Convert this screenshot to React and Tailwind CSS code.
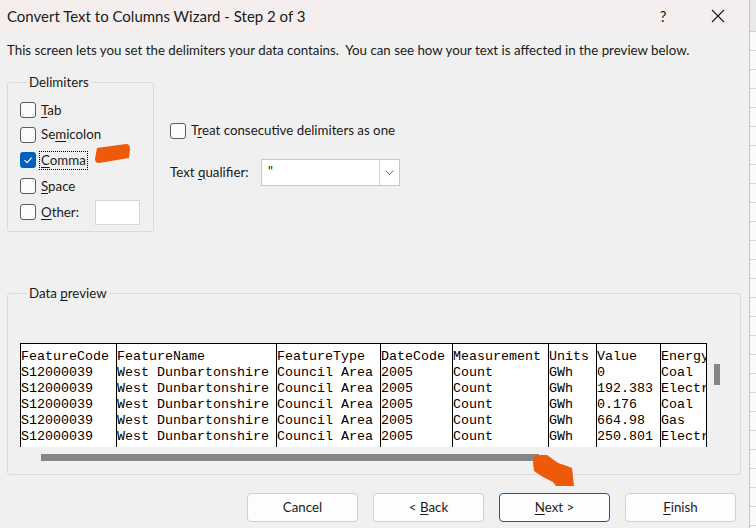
import React from 'react';

const ui = { fontFamily: 'Lato, "Noto Sans", sans-serif' };
const mono = { fontFamily: '"Liberation Mono", "Courier New", monospace' };

const columns = [
  { w: 'w-[96px]', rows: ['FeatureCode', 'S12000039', 'S12000039', 'S12000039', 'S12000039', 'S12000039'] },
  { w: 'w-[160px]', rows: ['FeatureName', 'West Dunbartonshire', 'West Dunbartonshire', 'West Dunbartonshire', 'West Dunbartonshire', 'West Dunbartonshire'] },
  { w: 'w-[104px]', rows: ['FeatureType', 'Council Area', 'Council Area', 'Council Area', 'Council Area', 'Council Area'] },
  { w: 'w-[72px]', rows: ['DateCode', '2005', '2005', '2005', '2005', '2005'] },
  { w: 'w-[96px]', rows: ['Measurement', 'Count', 'Count', 'Count', 'Count', 'Count'] },
  { w: 'w-[48px]', rows: ['Units', 'GWh', 'GWh', 'GWh', 'GWh', 'GWh'] },
  { w: 'w-[64px]', rows: ['Value', '0', '192.383', '0.176', '664.98', '250.801'] },
  { w: 'w-[46px]', rows: ['Energy', 'Coal', 'Electricity', 'Coal', 'Gas', 'Electricity'] },
];

const Key = ({ children }) => <span className="underline underline-offset-[2px] decoration-[1px]">{children}</span>;

const CheckBox = ({ checked }) =>
  checked ? (
    <span className="w-[16px] h-[16px] rounded-[3px] bg-[#005fb8] flex items-center justify-center shrink-0">
      <svg width="12" height="12" viewBox="0 0 12 12">
        <path d="M2.5 6.2 L5 8.6 L9.6 3.6" fill="none" stroke="white" strokeWidth="1.1" />
      </svg>
    </span>
  ) : (
    <span className="w-[16px] h-[16px] rounded-[3px] border border-[#5c5c5c] bg-[#fbfbfb] shrink-0" />
  );

const Option = ({ checked, focus, h, children, extra }) => (
  <div className={`flex items-center ${h}`}>
    <CheckBox checked={checked} />
    <span
      className={`ml-[3px] px-[1px] leading-[17px] border ${focus ? 'border-dotted border-black' : 'border-transparent'}`}
    >
      {children}
    </span>
    {extra}
  </div>
);

const Button = ({ primary, children }) => (
  <button
    className={`w-[111px] h-[29px] rounded-[4px] bg-[#fdfdfd] text-[13.3px] text-[#1b1b1b] border ${
      primary ? 'border-[#005fb8]' : 'border-[#d1d1d1]'
    }`}
  >
    {children}
  </button>
);

export default function App() {
  const sheetRows = Array.from({ length: 28 });

  return (
    <div className="relative w-[756px] h-[528px] flex overflow-hidden bg-white" style={ui}>
      {/* dialog */}
      <div className="w-[750px] h-[528px] flex flex-col bg-[#f0f0f0] border-r border-[#c4c4c4] text-[#1a1a1a]">
        <div className="h-[32px] shrink-0 flex items-center bg-[#f4efee] pl-[7px]">
          <span className="text-[15px]">Convert Text to Columns Wizard - Step 2 of 3</span>
          <span className="ml-auto text-[15px] w-[14px] text-center">?</span>
          <svg className="ml-[41px] mr-[24px]" width="14" height="14" viewBox="0 0 14 14">
            <path d="M1 1 L13 13 M13 1 L1 13" stroke="#1a1a1a" strokeWidth="1.1" />
          </svg>
        </div>

        <div className="flex-1 flex flex-col pl-[7px] text-[13.3px]">
          <p className="mt-[9px] leading-[18px]">
            This screen lets you set the delimiters your data contains.&nbsp; You can see how your text is affected in the
            preview below.
          </p>

          <div className="flex mt-[14px]">
            <fieldset className="w-[147px] h-[159px] border border-[#dadada] rounded-[3px] pl-[12px] pt-[7px]">
              <legend className="ml-[7px] px-[2px] leading-[18px]">Delimiters</legend>
              <Option h="h-[24px]">
                <Key>T</Key>ab
              </Option>
              <Option h="h-[25px]">
                Se<Key>m</Key>icolon
              </Option>
              <Option h="h-[26px]" checked focus>
                <Key>C</Key>omma
              </Option>
              <Option h="h-[26px]">
                <Key>S</Key>pace
              </Option>
              <Option
                h="h-[26px]"
                extra={<span className="ml-[14px] w-[45px] h-[25px] bg-white border border-[#d6d6d6]" />}
              >
                <Key>O</Key>ther:
              </Option>
            </fieldset>

            <div className="ml-[16px] flex flex-col">
              <div className="mt-[48px] h-[20px] flex items-center">
                <CheckBox />
                <span className="ml-[5px]">
                  T<Key>r</Key>eat consecutive delimiters as one
                </span>
              </div>
              <div className="mt-[18px] flex items-center">
                <span className="w-[91px]">
                  Text <Key>q</Key>ualifier:
                </span>
                <div className="w-[139px] h-[27px] bg-white border border-[#c8c8c8] flex">
                  <span className="flex-1 pl-[6px] leading-[22px]">"</span>
                  <span className="w-[20px] border-l border-[#d4d4d4] flex items-center justify-center">
                    <svg width="9" height="5" viewBox="0 0 9 5">
                      <path d="M0.5 0.5 L4.5 4.5 L8.5 0.5" fill="none" stroke="#6b6b6b" strokeWidth="1" />
                    </svg>
                  </span>
                </div>
              </div>
            </div>
          </div>

          <fieldset className="mt-[52px] w-[734px] border border-[#dadada] rounded-[3px] pl-[12px] pb-[13px]">
            <legend className="ml-[7px] px-[2px] leading-[18px]">
              Data <Key>p</Key>review
            </legend>
            <div className="mt-[41px] flex items-start">
              <div
                className="flex bg-white border-t border-r border-black h-[104px] overflow-hidden text-[13.33px] leading-[16px] text-black"
                style={mono}
              >
                {columns.map((col, i) => (
                  <div key={i} className={`${col.w} border-l border-black pt-[5px] whitespace-nowrap overflow-hidden`}>
                    {col.rows.map((r, j) => (
                      <div key={j} className="h-[16px]">
                        {r}
                      </div>
                    ))}
                  </div>
                ))}
              </div>
              <div className="ml-[7px] mt-[21px] w-[6px] h-[21px] bg-[#868686]" />
            </div>
            <div className="mt-[7px] ml-[21px] w-[498px] h-[7px] bg-[#868686]" />
          </fieldset>

          <div className="mt-[18px] flex justify-end gap-[15px] pr-[13px]">
            <Button>Cancel</Button>
            <Button>
              &lt; <Key>B</Key>ack
            </Button>
            <Button primary>
              <Key>N</Key>ext &gt;
            </Button>
            <Button>
              <Key>F</Key>inish
            </Button>
          </div>
        </div>
      </div>

      {/* spreadsheet behind the dialog */}
      <div className="flex-1 flex flex-col bg-[#fafafa]">
        <div className="h-[32px] shrink-0 bg-[#e9e9e9] border-b border-[#d0d0d0]" />
        {sheetRows.map((_, i) => (
          <div key={i} className="h-[19px] shrink-0 border-b border-[#d6d6d6]" />
        ))}
      </div>

      {/* orange annotation marks */}
      <svg className="absolute left-0 top-0 pointer-events-none" width="756" height="528">
        <path d="M97 148 L126 144 Q130 144 130 149 L129 158 L99 163 Q95 163 95 159 Z" fill="#ef5a0a" />
        <path
          d="M534 455 L547 455 L558 463 L567 466 L572 468 L574 486 L556 486 L553 482 L543 477 L534 471 L533 463 Z"
          fill="#ef5a0a"
        />
      </svg>
    </div>
  );
}
